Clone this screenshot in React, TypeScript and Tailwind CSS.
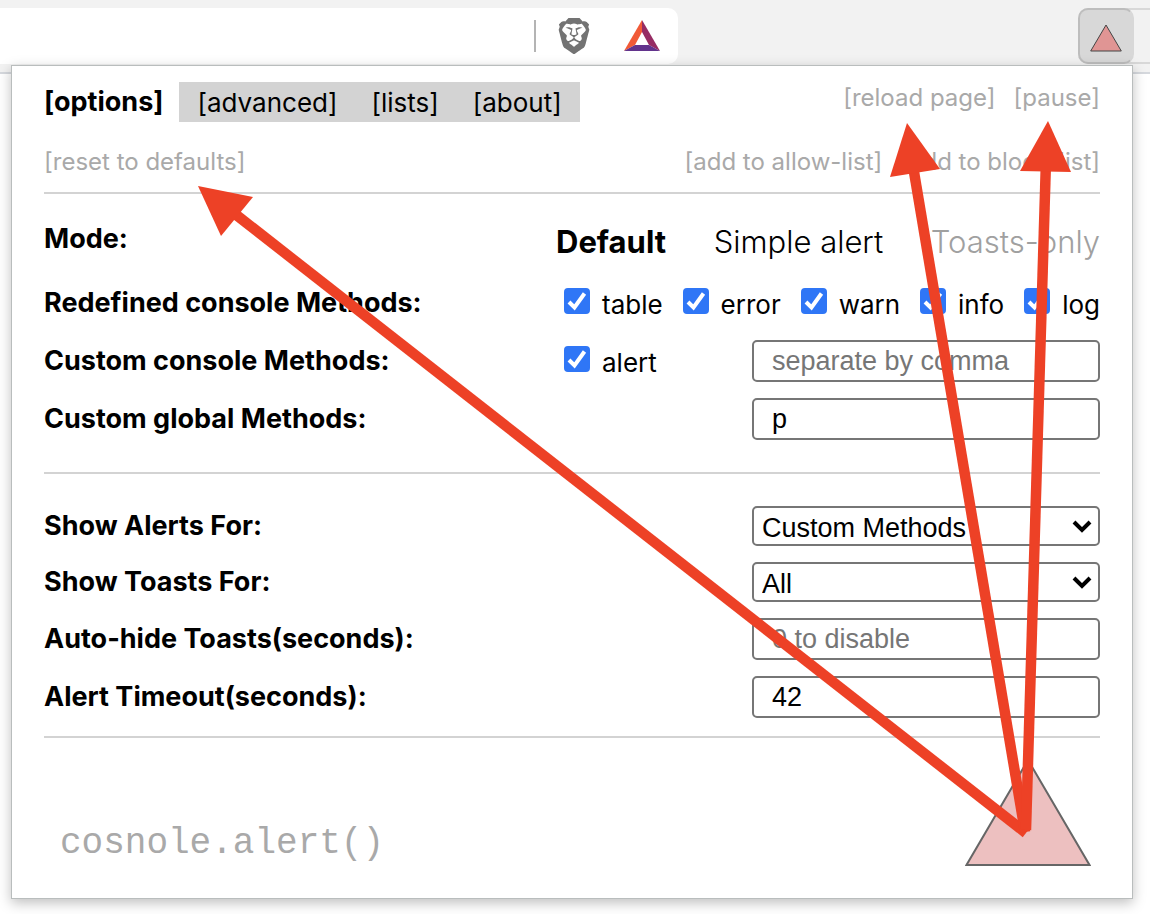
import type { ReactNode } from "react";
import { SiBrave } from "react-icons/si";

const SANS = "font-['Inter',sans-serif]";
const FIELD =
  "w-[348px] rounded-[5px] border-2 border-[#767676] bg-white font-['Liberation_Sans',Arial,sans-serif] text-[27px] text-black";

function Tick({ label }: { label: string }) {
  return (
    <label className="flex items-center gap-3 text-[26px] leading-8">
      <span className="mb-1 grid">
        <input
          type="checkbox"
          defaultChecked
          className="peer col-start-1 row-start-1 size-[26px] appearance-none rounded-[4px] border-2 border-[#767676] checked:border-[#2f76f6] checked:bg-[#2f76f6]"
        />
        <svg
          viewBox="0 0 26 26"
          className="pointer-events-none invisible col-start-1 row-start-1 size-[26px] peer-checked:visible"
        >
          <path d="M5 14l5.500 5.500L20.500 5.500" fill="none" stroke="#fff" strokeWidth="4" />
        </svg>
      </span>
      <span className="pt-1">{label}</span>
    </label>
  );
}

function Action({ children }: { children: ReactNode }) {
  return (
    <button type="button" className="text-[24px] leading-8 text-[#a9a9a9]">
      {children}
    </button>
  );
}

function TextRow({ id, label, value, placeholder, before }: {
  id: string;
  label: string;
  value?: string;
  placeholder?: string;
  before?: ReactNode;
}) {
  return (
    <div className="flex h-[42px] items-center justify-between">
      <label htmlFor={id} className="text-[27px] font-bold">{label}</label>
      <div className="flex w-[544px] items-center justify-between pl-2">
        {before}
        <input
          id={id}
          type="text"
          defaultValue={value}
          placeholder={placeholder}
          className={`${FIELD} ml-auto h-[42px] px-[18px] placeholder:text-[#767676] placeholder:opacity-100`}
        />
      </div>
    </div>
  );
}

function SelectRow({ id, label, options }: { id: string; label: string; options: string[] }) {
  return (
    <div className="flex h-10 items-center justify-between">
      <label htmlFor={id} className="text-[27px] font-bold">{label}</label>
      <div className="grid items-center">
        <select id={id} className={`${FIELD} col-start-1 row-start-1 h-10 appearance-none px-2`}>
          {options.map((option) => (
            <option key={option}>{option}</option>
          ))}
        </select>
        <svg
          viewBox="0 0 20 14"
          className="pointer-events-none col-start-1 row-start-1 mr-2 h-[14px] w-5 justify-self-end"
        >
          <path d="M2 3l8 8 8-8" fill="none" stroke="#000" strokeWidth="4" />
        </svg>
      </div>
    </div>
  );
}

function BatLogo() {
  return (
    <svg viewBox="0 0 36 32" className="h-8 w-9" role="img" aria-label="Brave Rewards">
      <path d="M18 0v12l-7 13-11 6z" fill="#f15a37" />
      <path d="M18 0l18 31-11-6-7-13z" fill="#962c63" />
      <path d="M0 31l11-6h14l11 6z" fill="#62338c" />
    </svg>
  );
}

function Toolbar() {
  return (
    <header className="flex h-[74px] items-start justify-between border-b-2 border-[#d5d8dd] bg-[#f2f2f2] pt-2">
      <div className="flex h-14 w-[678px] items-center justify-end rounded-r-[10px] bg-white pr-[18px]">
        <span className="mr-5 h-8 w-[2px] bg-[#b4b4b4]" />
        <SiBrave className="mr-8 size-9 text-[#737373]" aria-label="Brave Shields" />
        <BatLogo />
      </div>
      <div className="flex h-14 w-[72px] rounded-l-[10px] border-y-2 border-[#d8d8d8]">
        <button
          type="button"
          aria-label="cosnole.alert"
          className="-my-[2px] flex h-14 w-14 items-center justify-center rounded-[10px] border-2 border-[#bdbdbd] border-r-[#d8d8d8] bg-[#d8d8d8]"
        >
          <svg viewBox="0 0 32 28" className="mt-1 h-7 w-8">
            <path d="M16 1l15.300 26H0.700z" fill="#e09594" stroke="#444" strokeWidth="1" />
          </svg>
        </button>
      </div>
    </header>
  );
}

function Arrows() {
  return (
    <svg
      viewBox="11 65 1122 834"
      className="pointer-events-none absolute -inset-px h-[calc(100%+2px)] w-[calc(100%+2px)]"
      aria-hidden="true"
    >
      <g stroke="#ed4126" strokeWidth="10.500" fill="none">
        <path d="M1026 833L230 210" />
        <path d="M1025 832L912 160" />
        <path d="M1026 830L1046 160" />
      </g>
      <g fill="#ed4126">
        <path d="M198 186l55 11-32 39z" />
        <path d="M907 123l33 46-50 8z" />
        <path d="M1048 121l23 51-51-1z" />
      </g>
    </svg>
  );
}

export default function App() {
  return (
    <div className={`${SANS} min-h-screen bg-white text-black`}>
      <Toolbar />
      <main className="relative -mt-[9px] mr-[17px] ml-[11px] border border-[#b9bdbd] bg-white px-8 pt-4 shadow-[0_4px_12px_rgba(0,0,0,0.25)]">
        <div className="flex items-start justify-between">
          <nav className="flex h-10 items-center text-[26px]">
            <a href="#options" className="pr-4 text-[27px] font-bold">[options]</a>
            <div className="flex h-10 items-center gap-[34px] bg-[#d3d3d3] px-[18px]">
              <a href="#advanced">[advanced]</a>
              <a href="#lists">[lists]</a>
              <a href="#about">[about]</a>
            </div>
          </nav>
          <div className="flex gap-[18px]">
            <Action>[reload page]</Action>
            <Action>[pause]</Action>
          </div>
        </div>

        <div className="flex justify-between border-b-2 border-[#d3d3d3] pt-6 pb-[14px]">
          <Action>[reset to defaults]</Action>
          <div className="flex gap-[18px]">
            <Action>[add to allow-list]</Action>
            <Action>[add to block-list]</Action>
          </div>
        </div>

        <section className="flex flex-col gap-4 border-b-2 border-[#d3d3d3] pt-5 pb-8">
          <div className="flex h-[52px] items-start justify-between">
            <span className="text-[27px] leading-[50px] font-bold">Mode:</span>
            <div className="flex w-[544px] justify-between text-[31px] leading-[56px]">
              <button type="button" className="font-bold">Default</button>
              <button type="button" className="font-light">Simple alert</button>
              <button type="button" className="font-light text-[#a0a0a0]">Toasts-only</button>
            </div>
          </div>
          <div className="flex h-[42px] items-center justify-between">
            <span className="text-[27px] font-bold">Redefined console Methods:</span>
            <div className="flex w-[544px] justify-between pl-2">
              <Tick label="table" />
              <Tick label="error" />
              <Tick label="warn" />
              <Tick label="info" />
              <Tick label="log" />
            </div>
          </div>
          <TextRow
            id="custom-console"
            label="Custom console Methods:"
            placeholder="separate by comma"
            before={<Tick label="alert" />}
          />
          <TextRow id="custom-global" label="Custom global Methods:" value="p" />
        </section>

        <section className="flex flex-col gap-4 border-b-2 border-[#d3d3d3] pt-8 pb-[18px]">
          <SelectRow id="alerts-for" label="Show Alerts For:" options={["Custom Methods", "All"]} />
          <SelectRow id="toasts-for" label="Show Toasts For:" options={["All", "Custom Methods"]} />
          <TextRow id="auto-hide" label="Auto-hide Toasts(seconds):" placeholder="0 to disable" />
          <TextRow id="timeout" label="Alert Timeout(seconds):" value="42" />
        </section>

        <footer className="flex h-40 items-end justify-between pr-[9px] pb-8 pl-4">
          <span className="font-['Liberation_Mono','Courier_New',monospace] text-[36px] leading-[44px] text-[#a9a9a9]">
            cosnole.alert()
          </span>
          <svg viewBox="0 0 126 108" className="h-[108px] w-[126px]">
            <path d="M63 2l61.500 105H1.500z" fill="#edc0c0" stroke="#666" strokeWidth="2" />
          </svg>
        </footer>
        <Arrows />
      </main>
    </div>
  );
}
